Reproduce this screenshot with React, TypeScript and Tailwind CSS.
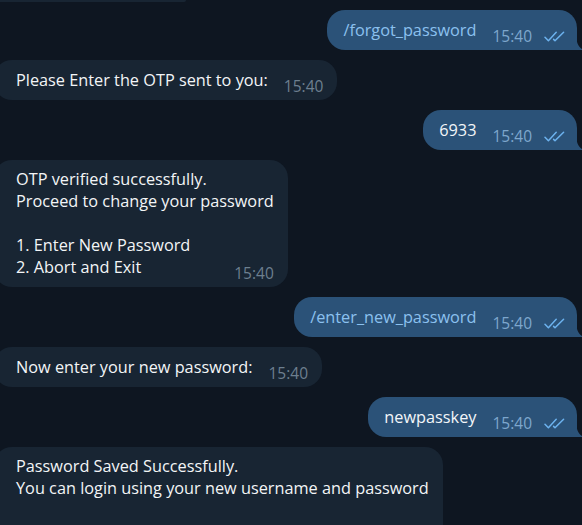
const IN_BG = "bg-[#182533]";

function Ticks() {
  return (
    <svg width="22" height="11" viewBox="0 0 22 11" className="ml-3 mb-[4px] shrink-0" fill="none">
      <path d="M1 6.2 L4.4 9.8 L12.2 1.2" stroke="#6cb2ee" strokeWidth="1.5" strokeLinecap="round" strokeLinejoin="round" />
      <path d="M9.6 8.4 L11 9.8 L19.6 1.2" stroke="#6cb2ee" strokeWidth="1.5" strokeLinecap="round" strokeLinejoin="round" />
    </svg>
  );
}

function Tail() {
  return (
    <svg width="8" height="16" viewBox="0 0 8 16" className="absolute -right-[7px] bottom-0">
      <path d="M0 0 C0 9 3 14 8 16 L0 16 Z" fill="#2b5278" />
    </svg>
  );
}

function Out({ text, cmd }: { text: string; cmd?: boolean }) {
  return (
    <div className="flex justify-end pr-[5px]">
      <div className="relative flex items-end rounded-[18px] rounded-br-none bg-[#2b5278] pl-4 pr-[11px] pt-[9px] pb-[4px]">
        <span className={"mb-[5px] text-[16.3px] leading-[22px] " + (cmd ? "text-[#8bc1ef]" : "text-[#f3f6f9]")}>
          {text}
        </span>
        <span className="ml-4 text-[15.5px] leading-[20px] text-[#7ea7cd]">15:40</span>
        <Ticks />
        <Tail />
      </div>
    </div>
  );
}

function In({ text }: { text: string }) {
  return (
    <div className="flex">
      <div className={"-ml-[6px] flex items-end rounded-[18px] pl-[22px] pr-[14px] pt-[9px] pb-[4px] " + IN_BG}>
        <span className="mb-[5px] text-[16.3px] leading-[22px] text-[#f3f5f7]">{text}</span>
        <span className="ml-4 text-[15.5px] leading-[20px] text-[#6d7f8f]">15:40</span>
      </div>
    </div>
  );
}

function InMulti({ lines, time }: { lines: string[]; time: boolean }) {
  return (
    <div className="flex">
      <div className={"-ml-[6px] flex flex-col rounded-[18px] pl-[22px] pr-[14px] pt-[8px] pb-[4px] " + IN_BG}>
        <div className="text-[16.3px] leading-[22px] text-[#f3f5f7]">
          {lines.map((l, i) => (
            <div key={i} className="h-[22px] whitespace-pre">{l}</div>
          ))}
        </div>
        {time ? (
          <div className="-mt-[15px] flex justify-end">
            <span className="text-[15.5px] leading-[20px] text-[#6d7f8f]">15:40</span>
          </div>
        ) : (
          <div className="h-[40px]" />
        )}
      </div>
    </div>
  );
}

export default function App() {
  return (
    <div className="h-[525px] w-full overflow-hidden bg-[#0e1621] font-['Open_Sans',sans-serif]">
      <div className="flex flex-col gap-[10px]">
        <div className={"-ml-[6px] -mb-[2px] h-[2px] w-[192px] rounded-br-[4px] " + IN_BG} />
        <Out text="/forgot_password" cmd />
        <In text="Please Enter the OTP sent to you:" />
        <Out text="6933" />
        <InMulti
          time
          lines={[
            "OTP verified successfully.",
            "Proceed to change your password",
            " ",
            "1. Enter New Password",
            "2. Abort and Exit",
          ]}
        />
        <Out text="/enter_new_password" cmd />
        <In text="Now enter your new password:" />
        <Out text="newpasskey" />
        <InMulti
          time={false}
          lines={["Password Saved Successfully.", "You can login using your new username and password"]}
        />
      </div>
    </div>
  );
}
